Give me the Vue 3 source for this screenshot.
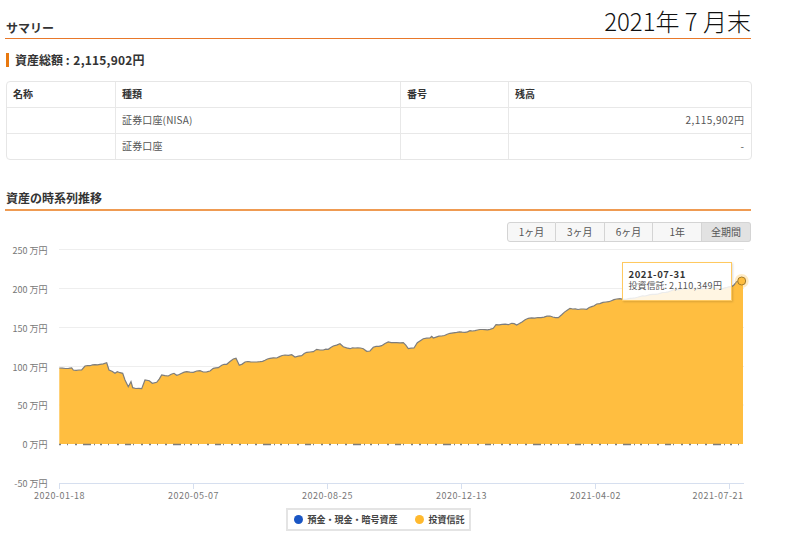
<script setup>
// 資産の時系列推移: anchors are in page pixels (x, y), rough() fills in the small daily moves
const anchors = [
  [59.3,368],[71.7,368],[73.3,370],[81.7,370],[85,366],[90,365.7],[100,364.3],[106.7,362.7],[109,370],[115,373.3],
  [117.3,371.7],[122.7,373.3],[125,380],[128.3,386.7],[131,381.7],[132.7,387.7],[141.7,388.7],[145,380],[149.3,380.7],
  [152.3,383.3],[156.7,382.3],[161.7,375],[168.3,376],[174,373.3],[176.7,375.3],[186.7,371.7],[193.3,372.3],[200,370.7],
  [203.3,372],[210,371],[213.3,368.3],[218.3,367.7],[221.7,365.3],[226.7,364.3],[233.3,359],[236,358.3],[239.3,365.3],
  [245,362],[253.3,362],[260,361.7],[270,358.3],[276.7,358],[285,355],[291.7,354.7],[295,357],[301.7,355.7],[306.7,352.3],
  [313.3,351.7],[316.7,349.3],[323.3,350],[328.3,349.3],[333.3,346],[340,343.7],[343.3,346.7],[350,348.7],[355,348],
  [363.3,348.7],[366.7,351.3],[370,351],[373.3,347.3],[381.7,345.7],[388.3,342],[396.7,342.7],[403.3,342.7],[408.3,348.7],
  [414,348],[417.3,342.7],[423.3,338.7],[430,338],[431.7,336.3],[433.3,338],[441.7,336],[450,333.3],[456.7,332.3],
  [465,332.3],[470,330.7],[490,329.3],[493.3,328.3],[496,324.7],[508.3,324.7],[511.7,323.3],[516.7,325],[522,322],
  [528.3,318.3],[538,317.5],[550,316],[558.3,317.7],[561.7,314.7],[570,308.3],[578,309.5],[586.7,309.3],[596.7,304],
  [606,302],[616.7,299],[623.3,299.3],[630,298.3],[645,296],[660,293.3],[676.7,289.3],[690,289],[703.3,288.3],
  [723.3,288.3],[731.7,286.7],[736.7,281.7],[741.7,281],[743,281]
]

function rough(list) {
  const out = []
  list.forEach((p, i) => {
    out.push(p)
    const next = list[i + 1]
    if (!next) return
    const steps = Math.floor((next[0] - p[0]) / 2.5)
    for (let s = 1; s < steps; s++) {
      const t = s / steps
      const wobble = Math.sin((p[0] + s) * 7.3) * 0.5
      out.push([+(p[0] + (next[0] - p[0]) * t).toFixed(1), +(p[1] + (next[1] - p[1]) * t + wobble).toFixed(1)])
    }
  })
  return out
}

const line = rough(anchors).map((p) => p.join(',')).join(' ')
const area = `59.3,444 ${line} 743,444`

const yLabels = [
  { y: 249.5, text: '250 万円' },
  { y: 288.5, text: '200 万円' },
  { y: 327.5, text: '150 万円' },
  { y: 366.5, text: '100 万円' },
  { y: 405, text: '50 万円' },
  { y: 444, text: '0 万円' },
  { y: 483, text: '-50 万円' }
]
const xLabels = [
  { x: 59.5, text: '2020-01-18' },
  { x: 193.5, text: '2020-05-07' },
  { x: 327.5, text: '2020-08-25' },
  { x: 461.5, text: '2020-12-13' },
  { x: 595.5, text: '2021-04-02' },
  { x: 729.5, text: '2021-07-21', labelX: 718 }
]
const ranges = ['1ヶ月', '3ヶ月', '6ヶ月', '1年', '全期間']
const rows = [
  { type: '証券口座(NISA)', balance: '2,115,902円' },
  { type: '証券口座', balance: '-' }
]
</script>

<template>
  <div class="page">
    <header class="summary-head">
      <h2>サマリー</h2>
      <span class="month">2021年 7 月末</span>
    </header>

    <div class="total">資産総額 : <span class="total-num">2,115,902円</span></div>

    <table class="accounts">
      <thead>
        <tr>
          <th class="c-name">名称</th>
          <th class="c-type">種類</th>
          <th class="c-no">番号</th>
          <th>残高</th>
        </tr>
      </thead>
      <tbody>
        <tr v-for="row in rows" :key="row.type">
          <td></td>
          <td>{{ row.type }}</td>
          <td></td>
          <td class="num">{{ row.balance }}</td>
        </tr>
      </tbody>
    </table>

    <h2 class="chart-head">資産の時系列推移</h2>

    <div class="ranges">
      <button v-for="r in ranges" :key="r" :class="{ on: r === '全期間' }">{{ r }}</button>
    </div>

    <div class="chart">
      <svg width="746" height="260" viewBox="5 243 746 260">
        <g stroke="#eeeeee" stroke-width="1">
          <line v-for="l in yLabels.slice(0, 5)" :key="l.y" x1="59" x2="744" :y1="l.y" :y2="l.y" />
        </g>
        <text v-for="l in yLabels" :key="l.text" class="axis-text" text-anchor="end" x="47.5" :y="l.y + 4">{{ l.text }}</text>
        <polygon :points="area" fill="#ffbe40" />
        <polyline :points="line" fill="none" stroke="#7d7d7d" stroke-width="1.2" />
        <line x1="59" x2="744" y1="444.5" y2="444.5" stroke="#7d7d7d" stroke-width="1.3"
          stroke-dasharray="2 6 1 7 2 6 8 3 1 5 2 6 1 8 2 6 6 2 1 7 2 6" />
        <line x1="59" x2="744" y1="483.5" y2="483.5" stroke="#d6dfef" stroke-width="1" />
        <line v-for="l in xLabels" :key="l.x" :x1="l.x" :x2="l.x" y1="483" y2="489" stroke="#d6dfef" stroke-width="1" />
        <text v-for="l in xLabels" :key="l.text" class="axis-text x-text" text-anchor="middle" :x="l.labelX || l.x" y="498.5">{{ l.text }}</text>
        <circle cx="741.7" cy="281" r="7" fill="#ffbe40" opacity="0.3" />
        <circle cx="741.7" cy="281" r="4" fill="#ffbe40" stroke="#a07c30" stroke-width="1" />
      </svg>
      <div class="tip">
        <div class="tip-date">2021-07-31</div>
        <div>投資信託: <span class="tip-num">2,110,349円</span></div>
      </div>
    </div>

    <div class="legend-wrap">
      <div class="legend">
        <span class="dot blue"></span><span>預金・現金・暗号資産</span>
        <span class="dot amber"></span><span>投資信託</span>
      </div>
    </div>
  </div>
</template>

<style scoped>
.page {
  width: 746px;
  padding-left: 5px;
  font-family: "Noto Sans CJK JP", "Open Sans", sans-serif;
  color: #333;
}
h2 {
  margin: 0;
  font-size: 12px;
  font-weight: 700;
  line-height: 18px;
}
.summary-head {
  display: flex;
  justify-content: space-between;
  align-items: flex-end;
  height: 38px;
  border-bottom: 1px solid #e8782a;
}
.summary-head h2 {
  padding: 0 0 1px 1px;
}
.month {
  margin-bottom: 1px;
  font-size: 24px;
  font-weight: 300;
  line-height: 32px;
  color: #111;
}
.total {
  margin: 14px 0 0 1px;
  padding-left: 6px;
  border-left: 3px solid #e8780f;
  font-size: 12px;
  font-weight: 700;
  line-height: 14px;
}
.total-num {
  margin-left: 1px;
  letter-spacing: 0.2px;
}
.accounts {
  margin-top: 14px;
  margin-left: 1px;
  width: 745.5px;
  border-collapse: separate;
  border-spacing: 0;
  border: 1px solid #e6e6e6;
  border-radius: 4px;
  table-layout: fixed;
  font-size: 10px;
}
.accounts th,
.accounts td {
  height: 23px;
  padding: 0 6px 2px;
  border-right: 1px solid #e8e8e8;
  border-bottom: 1px solid #e8e8e8;
  text-align: left;
  line-height: 14px;
}
.accounts th {
  font-weight: 700;
}
.accounts td {
  color: #555;
  letter-spacing: 0.15px;
}
.accounts th:last-child,
.accounts td:last-child {
  border-right: none;
}
.accounts tbody tr:last-child td {
  border-bottom: none;
}
.c-name { width: 96px; }
.c-type { width: 272px; }
.c-no { width: 95px; }
.accounts td.num {
  text-align: right;
  letter-spacing: 0.45px;
}
.chart-head {
  margin-top: 29px;
  padding: 0 0 2px 1px;
  border-bottom: 2px solid #ef9b52;
}
.ranges {
  display: flex;
  justify-content: flex-end;
  margin-top: 11px;
}
.ranges button {
  width: 48.8px;
  height: 20px;
  padding: 0 0 2px;
  border: 1px solid #d4d4d4;
  border-left: none;
  background: #f7f7f7;
  font-family: inherit;
  font-size: 10px;
  color: #555;
}
.ranges button:first-child {
  border-left: 1px solid #d4d4d4;
  border-radius: 3px 0 0 3px;
}
.ranges button:last-child {
  border-radius: 0 3px 3px 0;
}
.ranges button.on {
  background: #e2e2e2;
}
.chart {
  position: relative;
  height: 260px;
  margin-top: 1px;
}
.chart svg {
  display: block;
}
.axis-text {
  font-family: "Noto Sans CJK JP", "Open Sans", sans-serif;
  font-size: 9px;
  fill: #777;
}
.x-text {
  letter-spacing: 0.5px;
}
.tip {
  position: absolute;
  left: 616.5px;
  top: 19px;
  box-sizing: border-box;
  width: 110px;
  height: 39px;
  padding: 5px 6px;
  border: 1px solid #ffc95f;
  background: rgba(255, 255, 255, 0.85);
  box-shadow: 1px 1px 2px rgba(0, 0, 0, 0.15);
  font-size: 9px;
  line-height: 12px;
  color: #555;
  white-space: nowrap;
}
.tip-date {
  font-size: 9.5px;
  font-weight: 700;
  letter-spacing: 0.55px;
  color: #333;
}
.tip-num {
  letter-spacing: 0.45px;
}
.legend-wrap {
  display: flex;
  justify-content: center;
  margin-top: 5px;
}
.legend {
  display: flex;
  align-items: center;
  box-sizing: border-box;
  width: 185px;
  height: 23px;
  padding-left: 6px;
  border: 2px solid #e4e4e4;
  font-size: 9px;
  font-weight: 700;
  color: #444;
}
.dot {
  width: 9px;
  height: 9px;
  margin-right: 5px;
  border-radius: 50%;
}
.blue { background: #1a56c4; }
.amber { background: #ffb92e; margin-left: 17px; }
</style>

<style>
body {
  background: #fff;
}
</style>
